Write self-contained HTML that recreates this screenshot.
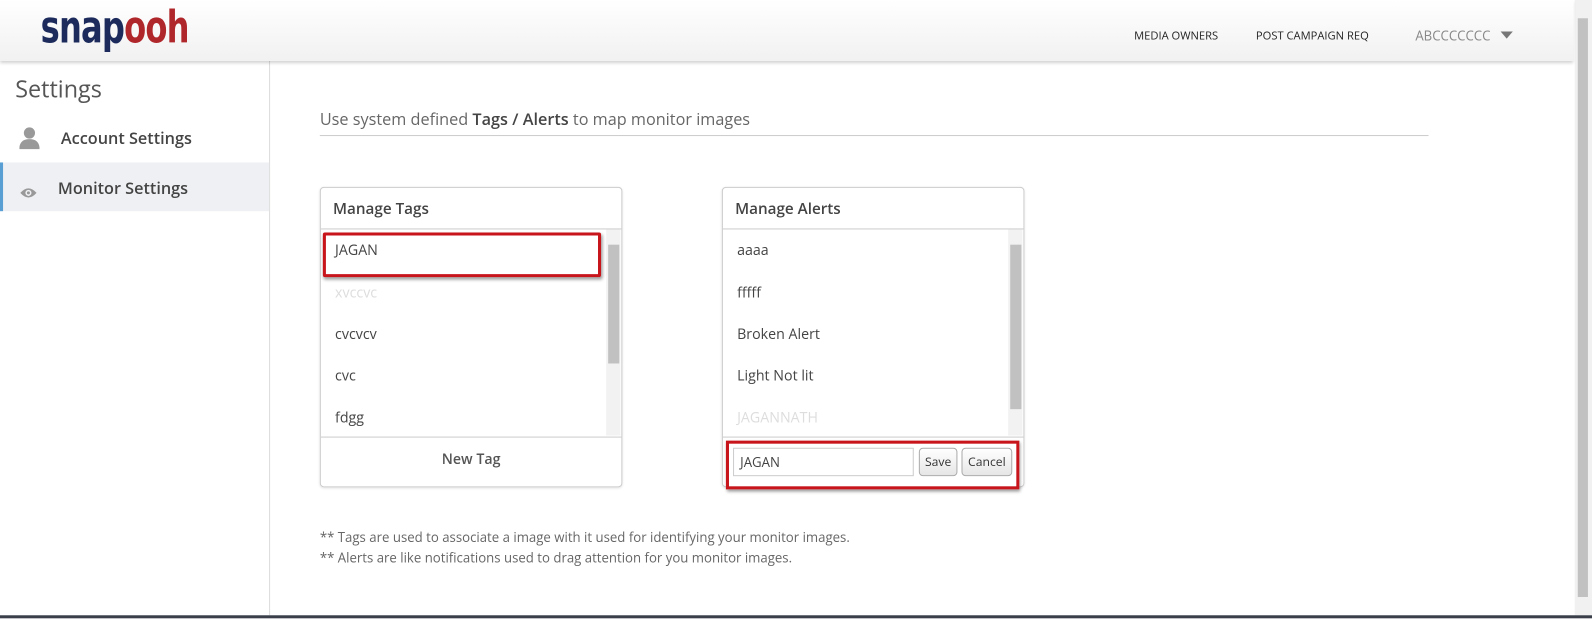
<!DOCTYPE html>
<html><head><style>
body{margin:0;width:1592px;height:620px;overflow:hidden;background:#fff;font-family:"Open Sans","Liberation Sans",sans-serif;position:relative;color:#555}
#w{position:absolute;left:0;top:0;width:1568px;height:611px;transform:scale(1.0153);transform-origin:0 0}
.a{position:absolute}
.hdr{left:0;top:0;width:1550px;height:60px;background:linear-gradient(#fff,#f1f1f1);box-shadow:0 2px 3px rgba(0,0,0,.18);z-index:2}
.logo{left:40px;top:2px;font:bold 44px "DejaVu Sans Condensed","Liberation Sans",sans-serif;letter-spacing:-1px;transform:scaleX(0.8);transform-origin:left}
.nav{top:28px;font-size:11px;color:#222}
.side{left:0;top:60px;width:265px;height:546px;border-right:1px solid #ddd}
.panel{top:184px;width:296px;height:294px;border:1px solid #ccc;border-radius:4px;box-shadow:0 1px 2px rgba(0,0,0,.1)}
.ph{height:40px;border-bottom:1px solid #ccc;font-size:15px;line-height:42px;padding-left:12px;color:#444;font-weight:600}
.it{position:absolute;left:14px;font-size:14px;color:#444}
.sb{position:absolute;right:1px;top:41px;width:14px;height:203px;background:#f2f2f2}
.th{position:absolute;left:2px;width:11px;background:#c1c1c1}
.pf{position:absolute;left:0;top:245px;width:296px;height:49px;border-top:1px solid #ccc}
.btn{position:absolute;top:10px;height:26px;border:1px solid #aaa;border-radius:4px;background:linear-gradient(#fff,#e6e6e6);font-size:12px;line-height:26px;text-align:center;color:#333}
</style></head><body><div id="w">
<div class="a hdr">
<div class="a logo"><span style="color:#1c2b5c">snap</span><span style="color:#b0272b">ooh</span></div>
<div class="a nav" style="left:1117px">MEDIA OWNERS</div>
<div class="a nav" style="left:1237px">POST CAMPAIGN REQ</div>
<div class="a nav" style="left:1394px;top:26px;font-size:13px;color:#888">ABCCCCCCC</div>
<div class="a" style="left:1478px;top:31px;border:6px solid transparent;border-top:7px solid #777;border-bottom:0"></div>
</div>
<div class="a" style="left:1551px;top:0;width:17px;height:606px;background:#f1f1f1"><div style="position:absolute;left:3px;top:18px;width:10px;height:570px;background:#c1c1c1"></div></div>
<div class="a side">
<div class="a" style="left:15px;top:11px;font-size:23px;color:#555">Settings</div>
<div class="a" style="left:19px;top:65px"><svg width="20" height="22"><circle cx="10" cy="6" r="5.5" fill="#999"/><path d="M0 22 Q0 12 10 12 Q20 12 20 22Z" fill="#999"/></svg></div>
<div class="a" style="left:60px;top:65px;font-size:16px;color:#444;font-weight:600">Account Settings</div>
<div class="a" style="left:0;top:100px;width:265px;height:48px;background:#eef0f3;border-left:3px solid #5a9fd4;box-sizing:border-box"></div>
<div class="a" style="left:19px;top:119px"><svg width="18" height="12"><path d="M1 6 Q9 -3 17 6 Q9 15 1 6Z" fill="#999"/><circle cx="9" cy="6" r="3" fill="#eef0f3"/><circle cx="9" cy="6" r="1.5" fill="#999"/></svg></div>
<div class="a" style="left:57px;top:114px;font-size:16px;color:#444;font-weight:600">Monitor Settings</div>
</div>
<div class="a" style="left:315px;top:106px;font-size:16px;color:#666">Use system defined <b style="color:#444;font-weight:600">Tags / Alerts</b> to map monitor images</div>
<div class="a" style="left:315px;top:133px;width:1092px;height:1px;background:#ccc"></div>

<div class="a panel" style="left:315px">
<div class="ph">Manage Tags</div>
<div class="a" style="left:2px;top:44px;width:268px;height:38px;border:3px solid #c8141b;border-radius:2px;box-shadow:1px 2px 3px rgba(0,0,0,.4)"></div>
<div class="it" style="top:52px">JAGAN</div>
<div class="it" style="top:94px;color:#ddd">xvccvc</div>
<div class="it" style="top:135px">cvcvcv</div>
<div class="it" style="top:176px">cvc</div>
<div class="it" style="top:217px">fdgg</div>
<div class="sb"><div class="th" style="top:15px;height:117px"></div></div>
<div class="pf"><div style="text-align:center;line-height:44px;font-size:14px;color:#555;font-weight:600">New Tag</div></div>
</div>

<div class="a panel" style="left:711px">
<div class="ph">Manage Alerts</div>
<div class="it" style="top:52px">aaaa</div>
<div class="it" style="top:94px">fffff</div>
<div class="it" style="top:135px">Broken Alert</div>
<div class="it" style="top:176px">Light Not lit</div>
<div class="it" style="top:217px;color:#ddd">JAGANNATH</div>
<div class="sb"><div class="th" style="top:15px;height:162px"></div></div>
<div class="pf">
<div class="a" style="left:3px;top:3px;width:283px;height:42px;border:3px solid #c8141b;box-shadow:1px 2px 3px rgba(0,0,0,.4)"></div>
<div class="a" style="left:10px;top:10px;width:178px;border:1px solid #ccc;font-size:13px;line-height:27px;padding-left:6px;box-sizing:border-box;height:28px;color:#444">JAGAN</div>
<div class="btn" style="left:193px;width:36px">Save</div>
<div class="btn" style="left:235px;width:48px">Cancel</div>
</div>
</div>

<div class="a" style="left:315px;top:519px;font-size:13px;color:#666;line-height:20px">** Tags are used to associate a image with it used for identifying your monitor images.<br>** Alerts are like notifications used to drag attention for you monitor images.</div>
<div class="a" style="left:0;top:606px;width:1568px;height:14px;background:#fff;border-top:3px solid #3a3f4a"></div>
</div></body></html>
